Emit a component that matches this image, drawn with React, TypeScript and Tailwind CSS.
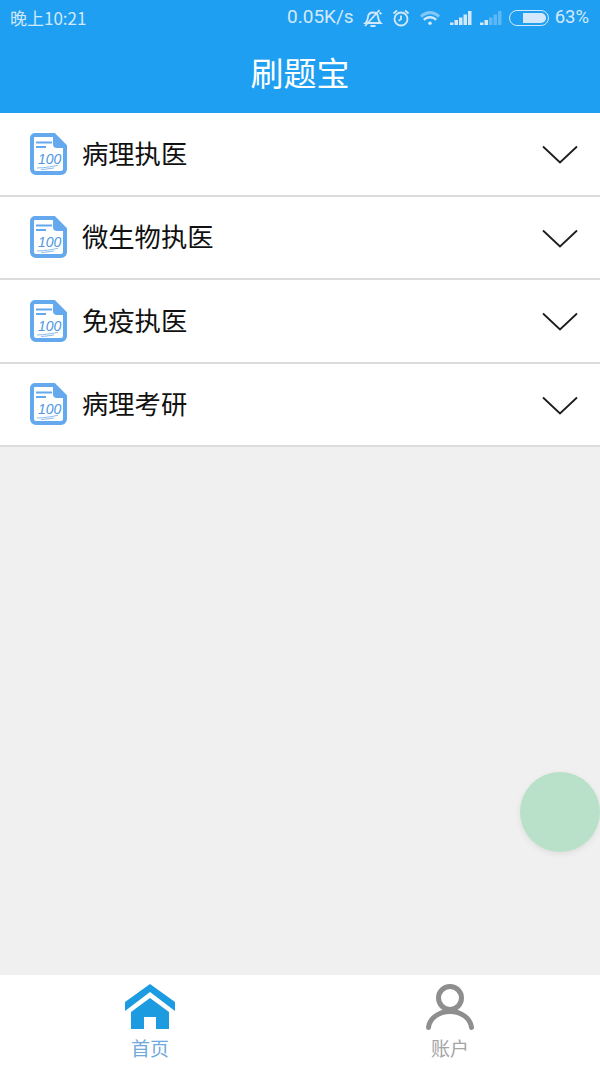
const subjects = ["病理执医", "微生物执医", "免疫执医", "病理考研"];

function PaperIcon() {
	return (
		<svg width="38" height="42" viewBox="0 0 38 42" className="shrink-0">
			<path d="M5 2H24L35 13V36a4 4 0 0 1-4 4H6a4 4 0 0 1-4-4V5a3 3 0 0 1 3-3Z" fill="#fff" stroke="#64a8ee" strokeWidth="4" />
			<path d="M23 0L37 14V15H27a4 4 0 0 1-4-4Z" fill="#64a8ee" />
			<rect x="6" y="8.500" width="16" height="2" fill="#64a8ee" />
			<rect x="6" y="13" width="10" height="2" fill="#64a8ee" />
			<text x="8" y="31" fontSize="14" fontStyle="italic" fontFamily="Liberation Sans, sans-serif" fill="#4f97e2">100</text>
			<path d="M7 35c8-.3 14-1.200 21-2.700M11 36.500c5-.3 9-.8 13-1.600" fill="none" stroke="#8fbdec" strokeWidth="1" />
		</svg>
	);
}

function Chevron() {
	return (
		<svg width="36" height="20" viewBox="0 0 36 20" className="mt-[3px] shrink-0">
			<path d="M1 1.500L18 17.500L35 1.500" fill="none" stroke="#1d1d1d" strokeWidth="1.800" />
		</svg>
	);
}

function StatusIcons() {
	return (
		<div className="flex items-center">
			{/* muted bell */}
			<svg width="20" height="20" viewBox="0 0 20 20" fill="none" stroke="#d3e9fb" strokeWidth="1.800" className="ml-[9px]">
				<path d="M2.500 15c1.800-1.500 2.200-3 2.400-5.500.2-3 2.200-5 5.100-5s4.600 1.700 5 4.200c.4 2.500.7 4.800 2.500 6.300Z" />
				<path d="M7.500 18h5M2 18L16.500 2M16.500 4.500l2 1.500" />
			</svg>
			{/* alarm */}
			<svg width="18" height="18" viewBox="0 0 18 18" fill="none" stroke="#d3e9fb" strokeWidth="1.800" className="ml-[9px]">
				<circle cx="9" cy="10" r="6.500" />
				<path d="M9 6.500v3.800l-2.500 1.400M1.500 4.500l3.500-3M16.500 4.500l-3.500-3" />
			</svg>
			{/* wifi */}
			<svg width="20" height="14" viewBox="0 0 20 14" className="ml-[10px]">
				<path d="M0 4.500c5.500-6 14.500-6 20 0l-2 2.200c-4.500-4.700-11.500-4.700-16 0Z" fill="#d3e9fb" opacity="0.55" />
				<path d="M3 8c4-4 10-4 14 0l-1.700 1.800c-3-3-7.600-3-10.600 0Z" fill="#d3e9fb" />
				<circle cx="10" cy="12.200" r="1.800" fill="#d3e9fb" />
			</svg>
			{/* strong signal */}
			<svg width="22" height="14" viewBox="0 0 22 14" fill="#d3e9fb" className="ml-[10px]">
				<rect x="0" y="11.500" width="3.500" height="2.500" />
				<rect x="4.500" y="9" width="3.500" height="5" />
				<rect x="9" y="6.500" width="3.500" height="7.500" />
				<rect x="13.500" y="3.500" width="3.500" height="10.500" />
				<rect x="18" y="0" width="3.500" height="14" />
			</svg>
			{/* weak signal */}
			<svg width="22" height="14" viewBox="0 0 22 14" fill="#d3e9fb" className="ml-[8px]">
				<rect x="0" y="11.500" width="3.500" height="2.500" />
				<rect x="4.500" y="9" width="3.500" height="5" />
				<rect x="9" y="6.500" width="3.500" height="7.500" opacity="0.35" />
				<rect x="13.500" y="3.500" width="3.500" height="10.500" opacity="0.35" />
				<rect x="18" y="0" width="3.500" height="14" opacity="0.35" />
			</svg>
			{/* battery */}
			<div className="ml-[7px] flex h-[16px] w-[40px] items-center justify-end rounded-full border border-[#d3e9fb] p-[2px]">
				<div className="h-full w-[23px] rounded-r-full rounded-l-[2px] bg-[#d3e9fb]" />
			</div>
		</div>
	);
}

export default function App() {
	return (
		<div className="relative flex h-[1067px] w-[600px] flex-col overflow-hidden bg-[#f0f0f0] font-['Noto_Sans_CJK_SC','Liberation_Sans',sans-serif]">
			<header className="flex h-[113px] shrink-0 flex-col bg-[#1f9ff1]">
				<div className="flex h-[35px] items-center justify-between pr-[11px] pl-[10px] text-[#d3e9fb]">
					<span className="text-[17px]">晚上10:21</span>
					<div className="flex items-center font-['Roboto',sans-serif]">
						<span className="text-[19px]">0.05K/s</span>
						<StatusIcons />
						<span className="ml-[6px] text-[18.500px]">63%</span>
					</div>
				</div>
				<h1 className="pt-[7px] text-center text-[33px] leading-[60px] font-normal text-white">刷题宝</h1>
			</header>

			<div className="flex flex-col">
				{subjects.map((name) => (
					<div
						key={name}
						className="flex h-[83.500px] items-center border-b-2 border-[#dcdcdc] bg-white pr-[22px] pl-[30px]"
					>
						<PaperIcon />
						<span className="ml-[14px] -mt-[2px] flex-1 text-[26.300px] leading-none text-[#111]">{name}</span>
						<Chevron />
					</div>
				))}
			</div>

			<div className="flex-1" />

			<nav className="grid h-[92px] shrink-0 grid-cols-2 bg-white">
				<div className="flex flex-col items-center pt-[9px]">
					<svg width="52" height="46" viewBox="0 0 52 46" fill="#1d9be0">
						<path d="M26 0L51 18V27L26 8L1 27V18Z" />
						<path d="M26 14L45 28V45H32V33H20V45H7V28Z" />
					</svg>
					<span className="mt-[5px] text-[19px] leading-[26px] text-[#6fa9dd]">首页</span>
				</div>
				<div className="flex flex-col items-center pt-[9px]">
					<svg width="52" height="46" viewBox="0 0 52 46" fill="none" stroke="#8e8e8e" strokeWidth="5" strokeLinecap="round">
						<circle cx="26" cy="14" r="11.500" />
						<path d="M4.500 43.500c1-9 10-16 21.500-16s20.500 7 21.500 16" />
					</svg>
					<span className="mt-[5px] text-[19px] leading-[26px] text-[#a5a5a5]">账户</span>
				</div>
			</nav>

			{/* floating action button */}
			<div className="absolute top-[772px] left-[520px] h-[80px] w-[80px] rounded-full bg-[#b9e1ca] shadow-[0_2px_6px_rgba(0,0,0,0.08)]" />
		</div>
	);
}
